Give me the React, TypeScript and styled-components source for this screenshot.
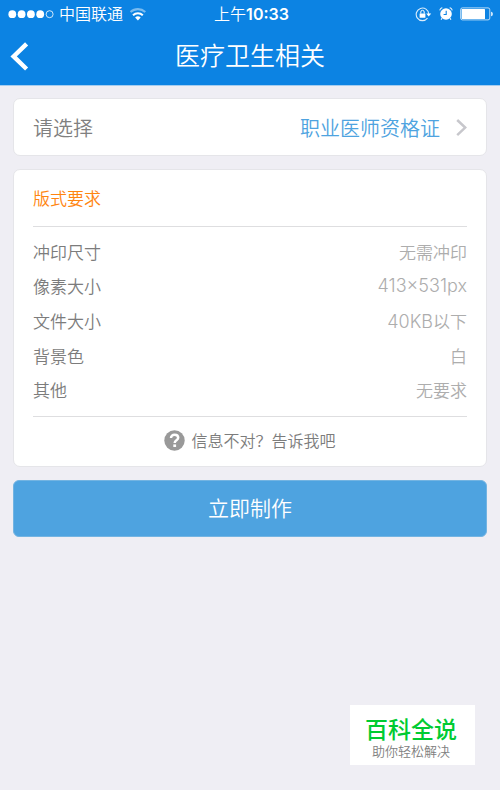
import React from "react";
import styled, { createGlobalStyle } from "styled-components";

const GlobalStyle = createGlobalStyle`
  *, *::before, *::after { box-sizing: border-box; }
  body {
    margin: 0;
    background: #efeef4;
    font-family: Inter, "Noto Sans CJK SC", sans-serif;
    font-weight: 350;
  }
  button { font-family: inherit; font-weight: inherit; cursor: pointer; }
`;

const Screen = styled.div`
  position: relative;
  min-height: 100vh;
`;

const Header = styled.header`
  border-bottom: 1px solid #a5cdf0;
  background: #0c83e3;
  color: #fff;
`;

const StatusBar = styled.div`
  display: grid;
  grid-template-columns: 1fr auto 1fr;
  align-items: center;
  height: 28px;
  padding: 0 7px 0 8px;
  font-size: 16px;
  line-height: 24px;
`;

const Carrier = styled.div`
  display: flex;
  align-items: center;
  gap: 5px;
`;

const Clock = styled.time`
  padding-left: 2px;
`;

const Digits = styled.span`
  font-weight: 600;
`;

const StatusIcons = styled.div`
  display: flex;
  align-items: center;
  justify-content: flex-end;
  gap: 7px;
`;

const NavBar = styled.div`
  display: grid;
  grid-template-columns: 48px 1fr 48px;
  align-items: center;
  height: 57px;
`;

const BackButton = styled.button`
  display: flex;
  align-items: center;
  height: 48px;
  padding: 0 0 0 10px;
  border: 0;
  background: none;
  color: inherit;
`;

const Title = styled.h1`
  margin: 0;
  padding-bottom: 2px;
  font-size: 25px;
  line-height: 36px;
  font-weight: inherit;
  text-align: center;
`;

const Content = styled.main`
  display: flex;
  flex-direction: column;
  gap: 13px;
  padding: 12px 13px;
`;

const PickerRow = styled.button`
  display: flex;
  align-items: center;
  width: 100%;
  height: 58px;
  padding: 4px 19px 0;
  border: 1px solid #e5e5e9;
  border-radius: 7px;
  background: #fff;
  color: #808080;
  font-size: 20px;
  line-height: 26px;
`;

const PickerValue = styled.span`
  margin: 0 16px 0 auto;
  color: #4ea3e0;
`;

const Card = styled.section`
  padding: 0 19px;
  border: 1px solid #e5e5e9;
  border-radius: 7px;
  background: #fff;
`;

const CardTitle = styled.h2`
  margin: 0;
  padding: 16px 0 14px;
  border-bottom: 1px solid #dedee0;
  color: #ff8510;
  font-size: 17px;
  line-height: 26px;
  font-weight: inherit;
`;

const SpecList = styled.dl`
  display: grid;
  grid-auto-rows: 1fr;
  height: 189px;
  margin: 0;
  padding: 7px 0 9px;
  font-size: 17px;
`;

const SpecRow = styled.div`
  display: flex;
  align-items: center;
  justify-content: space-between;
`;

const SpecName = styled.dt`
  color: #7c7c7c;
`;

const SpecValue = styled.dd`
  margin: 0;
  color: #adadad;
`;

const Latin = styled.span`
  font-size: 18px;
`;

const Feedback = styled.button`
  display: flex;
  align-items: center;
  justify-content: center;
  gap: 6px;
  width: 100%;
  height: 50px;
  padding: 0 0 2px;
  border: 0;
  border-top: 1px solid #dedee0;
  background: none;
  color: #7c7c7c;
  font-size: 16px;
  line-height: 24px;
`;

const PrimaryButton = styled.button`
  height: 57px;
  border: 1px solid #73b4e2;
  border-radius: 6px;
  background: #4ea3e0;
  color: #fff;
  font-size: 21px;
  line-height: 30px;
`;

const Watermark = styled.aside`
  position: absolute;
  right: 25px;
  bottom: 25px;
  width: 125px;
  height: 60px;
  padding: 9px 3px 0 0;
  background: #fff;
  text-align: center;
`;

const WatermarkName = styled.div`
  color: #00cb32;
  font-size: 23px;
  line-height: 32px;
  font-weight: 500;
`;

const WatermarkNote = styled.div`
  color: #808080;
  font-size: 13px;
  line-height: 10px;
`;

const specs = [
  { name: "冲印尺寸", value: "无需冲印" },
  { name: "像素大小", latin: "413×531px" },
  { name: "文件大小", latin: "40KB", value: "以下" },
  { name: "背景色", value: "白" },
  { name: "其他", value: "无要求" },
];

const SignalIcon = () => (
  <svg width="46" height="9" viewBox="0 0 46 9" fill="#fff" aria-hidden="true">
    <circle cx="4.3" cy="4.2" r="3.9" />
    <circle cx="13.6" cy="4.2" r="3.9" />
    <circle cx="22.9" cy="4.2" r="3.9" />
    <circle cx="32.2" cy="4.2" r="3.9" />
    <circle cx="41.6" cy="4.2" r="3.5" fill="none" stroke="#fff" strokeWidth="0.8" />
  </svg>
);

const WifiIcon = () => (
  <svg width="20" height="13" viewBox="0 0 20 13" fill="none" stroke="#fff" strokeWidth="2.1" aria-hidden="true">
    <path d="M2.5 4a11 11 0 0 1 14.8 0" opacity="0.45" />
    <path d="M5 7.2a7.2 7.2 0 0 1 9.8 0" />
    <path d="M7.1 9.4a4.2 4.2 0 0 1 5.6 0L9.9 12.4z" fill="#fff" stroke="none" />
  </svg>
);

const RotationLockIcon = () => (
  <svg width="17" height="15" viewBox="0 0 17 15" fill="none" stroke="#fff" aria-hidden="true">
    <path d="M12.5 11.2A6.3 6.3 0 1 1 13.8 7" strokeWidth="1.1" opacity="0.85" />
    <path d="M11.2 6.6h5l-2.5 2.8z" fill="#fff" stroke="none" />
    <rect x="4.6" y="6.4" width="5.8" height="4.4" rx="0.4" fill="#fff" stroke="none" />
    <path d="M5.8 6.6V5a1.7 1.7 0 0 1 3.4 0v1.6" strokeWidth="1" />
  </svg>
);

const AlarmIcon = () => (
  <svg width="14" height="14" viewBox="0 0 14 14" fill="#fff" aria-hidden="true">
    <circle cx="7" cy="7" r="5.8" />
    <path d="M0.7 3.4Q1.2 1.2 3.3 0.6M13.3 3.4Q12.8 1.2 10.7 0.6" fill="none" stroke="#fff" strokeWidth="1.1" opacity="0.85" />
    <path d="M3 11.2l-1 1.4M11 11.2l1 1.4" stroke="#fff" strokeWidth="1.1" />
    <path d="M7.2 3.7v3.8H4.6" fill="none" stroke="#0c83e3" strokeWidth="1.1" />
  </svg>
);

const BatteryIcon = () => (
  <svg width="33" height="14" viewBox="0 0 33 14" fill="none" aria-hidden="true">
    <rect x="0.6" y="0.9" width="29.2" height="12" rx="1.8" stroke="#fff" strokeWidth="1" opacity="0.7" />
    <rect x="1.6" y="2" width="23.4" height="10" rx="0.6" fill="#fff" />
    <path d="M31 4.8c1.4 0.3 1.9 1.1 1.9 2.2s-0.5 1.9-1.9 2.2z" fill="#fff" opacity="0.8" />
  </svg>
);

const BackIcon = () => (
  <svg width="19" height="30" viewBox="0 0 19 30" fill="none" stroke="#fff" strokeWidth="4.4" aria-hidden="true">
    <path d="M16.6 1.8L3.6 14.4l13 12.6" />
  </svg>
);

const ChevronIcon = () => (
  <svg width="11" height="20" viewBox="0 0 11 20" fill="none" stroke="#c7c7cc" strokeWidth="2.5" aria-hidden="true">
    <path d="M1.2 1L9.2 8.6l-8 7.6" />
  </svg>
);

const HelpIcon = () => (
  <svg width="21" height="21" viewBox="0 0 21 21" fill="none" aria-hidden="true">
    <circle cx="10.5" cy="10.5" r="10.2" fill="#999" />
    <path d="M7 8.1c0-2.1 1.5-3.3 3.6-3.3s3.6 1.2 3.6 3c0 2.6-3.5 2.5-3.5 5.2" stroke="#fff" strokeWidth="2.5" />
    <rect x="9.3" y="14.4" width="2.8" height="2.6" fill="#fff" />
  </svg>
);

export default function App() {
  return (
    <Screen>
      <GlobalStyle />
      <Header>
        <StatusBar>
          <Carrier>
            <SignalIcon />
            中国联通
            <WifiIcon />
          </Carrier>
          <Clock>
            上午<Digits>10:33</Digits>
          </Clock>
          <StatusIcons>
            <RotationLockIcon />
            <AlarmIcon />
            <BatteryIcon />
          </StatusIcons>
        </StatusBar>
        <NavBar>
          <BackButton type="button" aria-label="返回">
            <BackIcon />
          </BackButton>
          <Title>医疗卫生相关</Title>
        </NavBar>
      </Header>
      <Content>
        <PickerRow type="button">
          请选择
          <PickerValue>职业医师资格证</PickerValue>
          <ChevronIcon />
        </PickerRow>
        <Card>
          <CardTitle>版式要求</CardTitle>
          <SpecList>
            {specs.map((spec) => (
              <SpecRow key={spec.name}>
                <SpecName>{spec.name}</SpecName>
                <SpecValue>
                  {spec.latin && <Latin>{spec.latin}</Latin>}
                  {spec.value}
                </SpecValue>
              </SpecRow>
            ))}
          </SpecList>
          <Feedback type="button">
            <HelpIcon />
            信息不对？告诉我吧
          </Feedback>
        </Card>
        <PrimaryButton type="button">立即制作</PrimaryButton>
      </Content>
      <Watermark>
        <WatermarkName>百科全说</WatermarkName>
        <WatermarkNote>助你轻松解决</WatermarkNote>
      </Watermark>
    </Screen>
  );
}
